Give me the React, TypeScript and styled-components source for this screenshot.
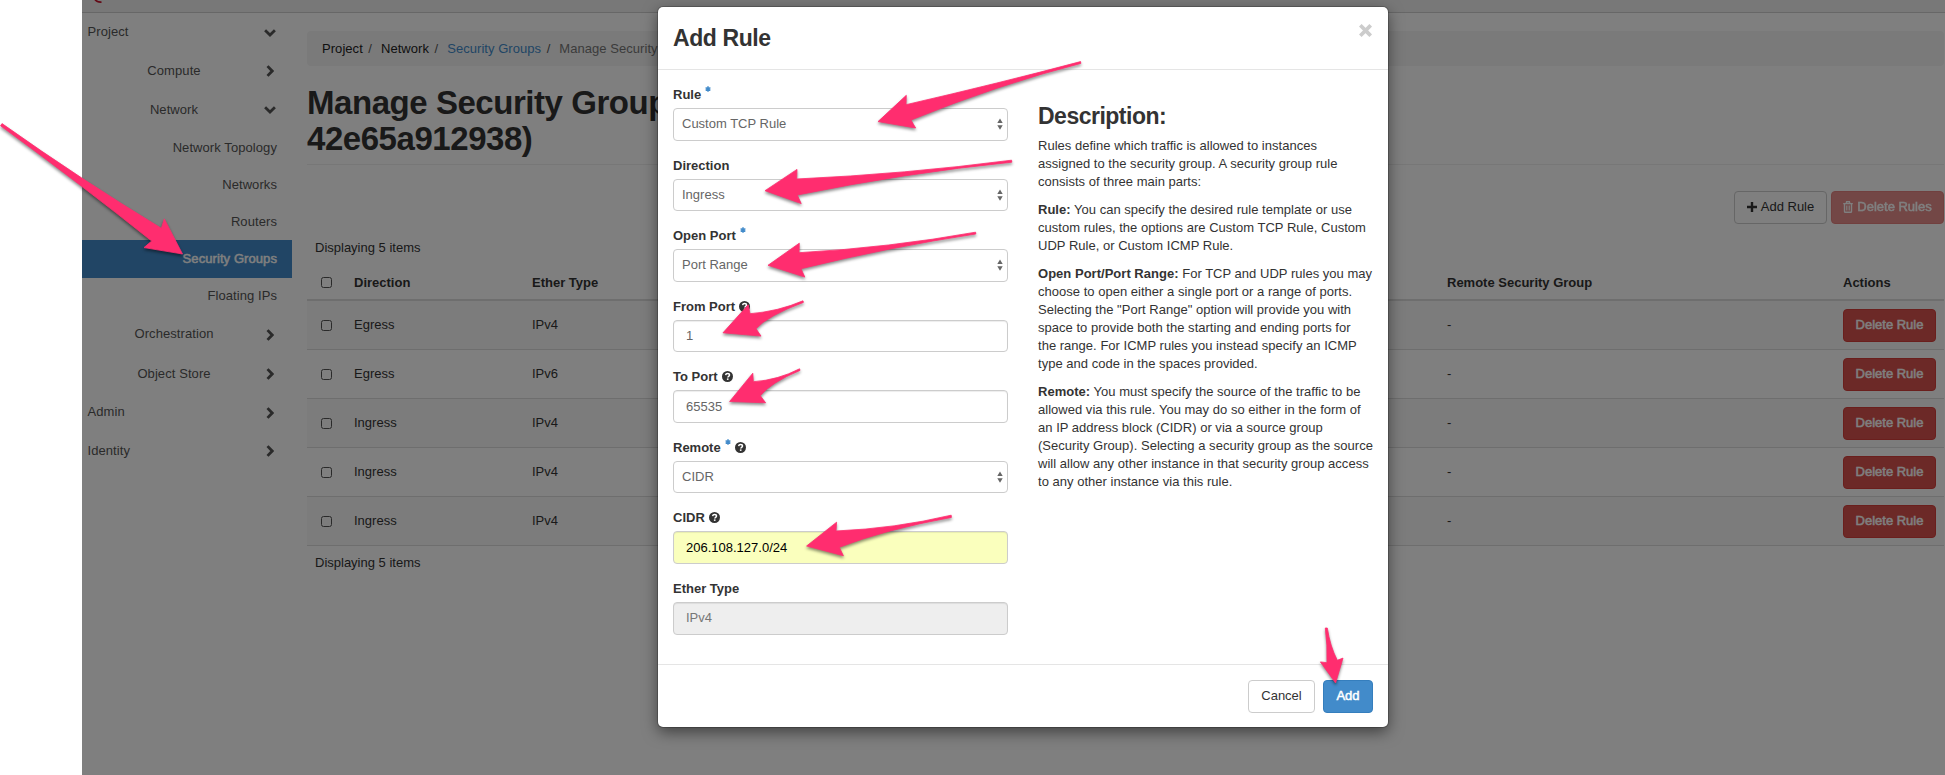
import React from 'react';
import styled, { createGlobalStyle, css } from 'styled-components';

const GlobalStyle = createGlobalStyle`
  * { box-sizing: border-box; }
  html, body { margin: 0; padding: 0; background: #fff; }
  body {
    width: 1945px;
    height: 775px;
    overflow: hidden;
    font-family: "Helvetica Neue", "Liberation Sans", Arial, sans-serif;
    font-size: 13px;
    line-height: 18px;
    color: #333;
  }
`;

/* ---------- page shell ---------- */

const Page = styled.div`
  position: relative;
  display: flex;
  width: 1945px;
  height: 775px;
  overflow: hidden;
`;

const Gutter = styled.div`
  flex: 0 0 82px;
  background: #fff;
`;

const Shell = styled.div`
  flex: 1;
  display: flex;
  flex-direction: column;
  background: #fff;
`;

const TopBar = styled.header`
  height: 13px;
  padding-left: 12px;
  background: #f0f0f0;
  border-bottom: 1px solid #cfcfcf;
  svg { display: block; }
`;

const Columns = styled.div`
  flex: 1;
  display: flex;
`;

/* ---------- sidebar ---------- */

const Sidebar = styled.nav`
  width: 210px;
  color: #555;
  letter-spacing: 0.08px;
`;

const NavHeader = styled.div<{ $height?: number }>`
  display: flex;
  align-items: center;
  justify-content: space-between;
  height: ${p => p.$height ?? 39}px;
  padding: 0 15px 0 5.5px;
`;

const NavTitle = styled.span<{ $nested?: boolean }>`
  ${p => p.$nested && css`
    width: 173px;
    text-align: center;
  `}
`;

const ChevronBox = styled.span`
  display: flex;
  justify-content: center;
  width: 14px;
  margin-top: 1px;
`;

const NavLeaf = styled.div<{ $active?: boolean; $height?: number }>`
  display: flex;
  align-items: center;
  justify-content: flex-end;
  height: ${p => p.$height ?? 37}px;
  padding-right: 15px;
  ${p => p.$active && css`
    background: #428bca;
    color: #fff;
    -webkit-text-stroke: 0.5px #fff;
  `}
`;

/* ---------- main content ---------- */

const Main = styled.main`
  flex: 1;
  padding: 18px 1px 0 15px;
`;

const Breadcrumb = styled.div`
  display: flex;
  align-items: center;
  height: 35px;
  padding-left: 15px;
  background: #f5f5f5;
  border-radius: 4px;
  overflow: hidden;
  white-space: nowrap;
  letter-spacing: 0.05px;
`;

const Crumb = styled.span<{ $color?: string }>`
  color: ${p => p.$color ?? '#222'};
`;

const Slash = styled.span`
  margin: 0 9px 0 5.5px;
  color: #555;
`;

const PageTitle = styled.h1`
  margin: 19px 0 0;
  height: 80px;
  border-bottom: 1px solid #eee;
  font-size: 33px;
  line-height: 36.3px;
  font-weight: 700;
  letter-spacing: -0.45px;
  white-space: nowrap;
`;

const Toolbar = styled.div`
  display: flex;
  justify-content: flex-end;
  gap: 4px;
  padding-top: 26px;
  height: 74px;
`;

const Button = styled.button<{ $kind?: 'default' | 'primary' | 'danger'; $faded?: boolean; $width: number }>`
  display: inline-flex;
  align-items: center;
  justify-content: center;
  gap: 4px;
  width: ${p => p.$width}px;
  height: 33px;
  padding: 0 0 1px;
  border: 1px solid #ccc;
  border-radius: 4px;
  background: #fff;
  color: #333;
  font: inherit;
  white-space: nowrap;
  ${p => p.$kind === 'primary' && css`
    background: #428bca; border-color: #357ebd; color: #fff;
    -webkit-text-stroke: 0.5px #fff;
  `}
  ${p => p.$kind === 'danger' && css`
    background: #d9534f; border-color: #d43f3a; color: #fff;
    -webkit-text-stroke: 0.5px #fff;
  `}
  ${p => p.$faded && css`opacity: 0.65;`}
`;

const TableNote = styled.div<{ $footer?: boolean }>`
  padding: ${p => (p.$footer ? 8 : 0)}px 0 0 8px;
`;

const Row = styled.div<{ $head?: boolean; $striped?: boolean }>`
  display: grid;
  grid-template-columns: 39px 178px 915px 396px 1fr;
  align-items: center;
  height: ${p => (p.$head ? 44 : 49)}px;
  padding-top: ${p => (p.$head ? 9 : 0)}px;
  border-bottom: ${p => (p.$head ? 2 : 1)}px solid #ddd;
  background: ${p => (p.$striped ? '#f9f9f9' : 'transparent')};
  font-weight: ${p => (p.$head ? 700 : 400)};
`;

const Cell = styled.div<{ $text?: boolean }>`
  padding: 0 0 ${p => (p.$text ? 1 : 0)}px 8px;
`;

const CheckBox = styled.span`
  display: block;
  width: 11px;
  height: 11px;
  margin-left: 14px;
  border: 1px solid #555;
  border-radius: 2.5px;
`;

/* ---------- modal ---------- */

const Backdrop = styled.div`
  position: absolute;
  inset: 0 0 0 82px;
  padding: 7px 0 0 576px;
  background: rgba(0, 0, 0, 0.5);
`;

const Modal = styled.section`
  width: 730px;
  height: 720px;
  background: #fff;
  border-radius: 5px;
  box-shadow: 0 0 0 1px rgba(0, 0, 0, 0.2), 0 5px 15px rgba(0, 0, 0, 0.5);
`;

const ModalHeader = styled.header`
  display: flex;
  justify-content: space-between;
  height: 63px;
  padding: 17px 16px 0 15px;
  border-bottom: 1px solid #e5e5e5;
`;

const Heading = styled.h3`
  margin: 0;
  font-size: 23px;
  line-height: 25px;
  font-weight: 700;
  letter-spacing: -0.4px;
`;

const ModalTitle = styled(Heading)`
  padding-top: 2px;
`;

const ModalBody = styled.div`
  display: flex;
  height: 594px;
  padding: 15px;
`;

const Form = styled.div`
  width: 335px;
`;

const Field = styled.div`
  margin-bottom: 15px;
`;

const Label = styled.label`
  display: flex;
  align-items: center;
  height: 18px;
  padding-top: 2px;
  margin-bottom: 5px;
  font-weight: 700;
  white-space: nowrap;
`;

const Star = styled.svg`
  margin: -12px 0 0 4px;
`;

const Help = styled.svg`
  margin: -1px 0 0 4px;
`;

const Control = styled.div<{ $select?: boolean; $fill?: string; $color?: string }>`
  display: flex;
  align-items: center;
  justify-content: space-between;
  height: 32.57px;
  padding: 0 4px 0 ${p => (p.$select ? 8 : 12)}px;
  border: 1px solid #ccc;
  border-radius: 4px;
  background: ${p => p.$fill ?? '#fff'};
  color: ${p => p.$color ?? '#666'};
  ${p => !p.$select && css`box-shadow: inset 0 1px 1px rgba(0, 0, 0, 0.075);`}
`;

const Description = styled.div`
  width: 335px;
  margin-left: 30px;
  padding-top: 19px;
  white-space: nowrap;
  letter-spacing: 0.02px;
`;

const Paragraph = styled.p`
  margin: 0 0 10px;
`;

const DescriptionTitle = styled(Heading)`
  margin: 0 0 8px;
  letter-spacing: -0.5px;
`;

const ModalFooter = styled.footer`
  display: flex;
  justify-content: flex-end;
  gap: 8px;
  padding: 15px;
  border-top: 1px solid #e5e5e5;
`;

/* ---------- icons ---------- */

const ChevronDown = () => (
  <ChevronBox>
    <svg width="12" height="8" viewBox="0 0 12 8">
      <path d="M1.1 1.3 6 6 10.9 1.3" fill="none" stroke="#555" strokeWidth="2.8" />
    </svg>
  </ChevronBox>
);

const ChevronRight = () => (
  <ChevronBox>
    <svg width="8" height="12" viewBox="0 0 8 12">
      <path d="M1.5 1.1 6.2 6 1.5 10.9" fill="none" stroke="#555" strokeWidth="2.8" />
    </svg>
  </ChevronBox>
);

const Asterisk = () => (
  <Star width="6" height="6" viewBox="0 0 6 6">
    <path d="M3 .2V5.8M.6 1.6 5.4 4.4M5.4 1.6.6 4.4" stroke="#428bca" strokeWidth="1.5" />
  </Star>
);

const HelpIcon = () => (
  <Help width="11" height="11" viewBox="0 0 11 11">
    <circle cx="5.5" cy="5.5" r="5.5" fill="#333" />
    <path d="M3.6 4.2C3.8 2.9 4.7 2.5 5.6 2.5c1 0 1.9.6 1.9 1.6 0 1.2-1.7 1.3-1.7 2.5" fill="none" stroke="#fff" strokeWidth="1.5" />
    <rect x="4.9" y="7.4" width="1.6" height="1.5" fill="#fff" />
  </Help>
);

const CloseIcon = () => (
  <svg width="13" height="13" viewBox="0 0 13 13">
    <path d="M2.6 2.6 10.4 10.4M10.4 2.6 2.6 10.4" stroke="#ccc" strokeWidth="3.7" strokeLinecap="square" />
  </svg>
);

const PlusIcon = () => (
  <svg width="10" height="10" viewBox="0 0 10 10">
    <path d="M5 0v10M0 5h10" stroke="#333" strokeWidth="2.4" />
  </svg>
);

const TrashIcon = () => (
  <svg width="10" height="12" viewBox="0 0 10 12" fill="none" stroke="#fff">
    <path d="M.2 2.6H9.8M3.2 2.4 3.6.8H6.4L6.8 2.4M1.5 2.8V10.4Q1.5 11.3 2.3 11.3H7.7Q8.5 11.3 8.5 10.4V2.8" strokeWidth="1.4" />
    <path d="M3.5 4.5V9.5M5 4.5V9.5M6.5 4.5V9.5" strokeWidth=".8" />
  </svg>
);

const SelectArrows = () => (
  <svg width="6" height="12" viewBox="0 0 6 12">
    <path d="M3 .4 5.7 5H.3ZM.3 7.2H5.7L3 11.8Z" fill="#666" />
  </svg>
);

/* ---------- annotation arrows ---------- */

const Annotations = styled.svg`
  position: absolute;
  inset: 0;
  filter: drop-shadow(0 2px 1.5px rgba(0, 0, 0, 0.45));
`;

const arrowPaths = [
  'M2 123.6Q81 179.5 161.3 228.3L164.3 218.9 182.5 254 144 247.6 151.7 241Q81 184.5 .6 125.8Z',
  'M1080.6 61.6Q1000 83 906 104.7L906.3 95.3 878 121.6 915.6 128 911 120Q1000 84 1080.8 63.4Z',
  'M1011.6 160.2Q905 174 796.7 179L797 169.4 765 190.7 801.2 203.6 797.3 195Q905 173 1011.8 162.2Z',
  'M975.6 232.2Q890 247.5 799 252.7L799.3 243.2 768 265.3 804.8 277.1 801 268.7Q890 247 975.8 234Z',
  'M803 300.8Q778 311.5 750 313.7L748.2 304.8 723 332.8 761 336.1 756 328.7Q768 315.5 803.4 302.4Z',
  'M799.6 368.8Q778 380 753.3 381.7L752.8 373.2 729.6 401.5 765.6 402.8 760.3 395.7Q771 382.5 800 370.4Z',
  'M951.2 515.2Q895 528.5 836 531L836.6 522.2 806.6 546 843.4 555.8 839.3 547.3Q885 529.5 951.4 517.4Z',
  'M1325.3 628Q1327.6 645 1327 662.7L1320.4 661.9 1335.6 683 1343 658.1 1337.3 660.3Q1330 646 1327.3 628Z',
];

/* ---------- data ---------- */

const rules = [
  ['Egress', 'IPv4'],
  ['Egress', 'IPv6'],
  ['Ingress', 'IPv4'],
  ['Ingress', 'IPv4'],
  ['Ingress', 'IPv4'],
];

type FieldSpec = {
  label: string;
  value: string;
  required?: boolean;
  help?: boolean;
  select?: boolean;
  fill?: string;
  color?: string;
};

const fields: FieldSpec[] = [
  { label: 'Rule', value: 'Custom TCP Rule', required: true, select: true },
  { label: 'Direction', value: 'Ingress', select: true },
  { label: 'Open Port', value: 'Port Range', required: true, select: true },
  { label: 'From Port', value: '1', help: true },
  { label: 'To Port', value: '65535', help: true },
  { label: 'Remote', value: 'CIDR', required: true, help: true, select: true },
  { label: 'CIDR', value: '206.108.127.0/24', help: true, fill: '#faffbd', color: '#000' },
  { label: 'Ether Type', value: 'IPv4', fill: '#eee', color: '#777' },
];

const paragraphs: { term?: string; lines: string[] }[] = [
  {
    lines: [
      'Rules define which traffic is allowed to instances',
      'assigned to the security group. A security group rule',
      'consists of three main parts:',
    ],
  },
  {
    term: 'Rule:',
    lines: [
      ' You can specify the desired rule template or use',
      'custom rules, the options are Custom TCP Rule, Custom',
      'UDP Rule, or Custom ICMP Rule.',
    ],
  },
  {
    term: 'Open Port/Port Range:',
    lines: [
      ' For TCP and UDP rules you may',
      'choose to open either a single port or a range of ports.',
      'Selecting the "Port Range" option will provide you with',
      'space to provide both the starting and ending ports for',
      'the range. For ICMP rules you instead specify an ICMP',
      'type and code in the spaces provided.',
    ],
  },
  {
    term: 'Remote:',
    lines: [
      ' You must specify the source of the traffic to be',
      'allowed via this rule. You may do so either in the form of',
      'an IP address block (CIDR) or via a source group',
      '(Security Group). Selecting a security group as the source',
      'will allow any other instance in that security group access',
      'to any other instance via this rule.',
    ],
  },
];

export default function App() {
  return (
    <>
      <GlobalStyle />
      <Page>
        <Gutter />
        <Shell>
          <TopBar>
            <svg width="11" height="4" viewBox="0 0 11 4">
              <path d="M1 -.5Q3 2.4 7.5 2.2" fill="none" stroke="#c8102a" strokeWidth="1.7" />
            </svg>
          </TopBar>
          <Columns>
            <Sidebar>
              <NavHeader $height={38}><NavTitle>Project</NavTitle><ChevronDown /></NavHeader>
              <NavHeader><NavTitle $nested>Compute</NavTitle><ChevronRight /></NavHeader>
              <NavHeader><NavTitle $nested>Network</NavTitle><ChevronDown /></NavHeader>
              <NavLeaf>Network Topology</NavLeaf>
              <NavLeaf>Networks</NavLeaf>
              <NavLeaf>Routers</NavLeaf>
              <NavLeaf $active $height={38}>Security Groups</NavLeaf>
              <NavLeaf $height={36}>Floating IPs</NavLeaf>
              <NavHeader $height={40}><NavTitle $nested>Orchestration</NavTitle><ChevronRight /></NavHeader>
              <NavHeader><NavTitle $nested>Object Store</NavTitle><ChevronRight /></NavHeader>
              <NavHeader $height={38}><NavTitle>Admin</NavTitle><ChevronRight /></NavHeader>
              <NavHeader><NavTitle>Identity</NavTitle><ChevronRight /></NavHeader>
            </Sidebar>
            <Main>
              <Breadcrumb>
                <Crumb>Project</Crumb><Slash>/</Slash>
                <Crumb>Network</Crumb><Slash>/</Slash>
                <Crumb $color="#428bca">Security Groups</Crumb><Slash>/</Slash>
                <Crumb $color="#777">Manage Security</Crumb>
              </Breadcrumb>
              <PageTitle>Manage Security Group<br />42e65a912938)</PageTitle>
              <Toolbar>
                <Button $width={93}><PlusIcon />Add Rule</Button>
                <Button $width={113} $kind="danger" $faded><TrashIcon />Delete Rules</Button>
              </Toolbar>
              <TableNote>Displaying 5 items</TableNote>
              <Row $head>
                <CheckBox />
                <Cell>Direction</Cell>
                <Cell>Ether Type</Cell>
                <Cell>Remote Security Group</Cell>
                <Cell>Actions</Cell>
              </Row>
              {rules.map(([direction, ether], i) => (
                <Row key={i} $striped={i % 2 === 0}>
                  <CheckBox />
                  <Cell $text>{direction}</Cell>
                  <Cell $text>{ether}</Cell>
                  <Cell $text>-</Cell>
                  <Cell><Button $width={93} $kind="danger">Delete Rule</Button></Cell>
                </Row>
              ))}
              <TableNote $footer>Displaying 5 items</TableNote>
            </Main>
          </Columns>
        </Shell>

        <Backdrop>
          <Modal>
            <ModalHeader>
              <ModalTitle>Add Rule</ModalTitle>
              <CloseIcon />
            </ModalHeader>
            <ModalBody>
              <Form>
                {fields.map(f => (
                  <Field key={f.label}>
                    <Label>
                      {f.label}
                      {f.required && <Asterisk />}
                      {f.help && <HelpIcon />}
                    </Label>
                    <Control $select={f.select} $fill={f.fill} $color={f.color}>
                      <span>{f.value}</span>
                      {f.select && <SelectArrows />}
                    </Control>
                  </Field>
                ))}
              </Form>
              <Description>
                <DescriptionTitle>Description:</DescriptionTitle>
                {paragraphs.map((p, i) => (
                  <Paragraph key={i}>
                    {p.term && <strong>{p.term}</strong>}
                    {p.lines.map((line, j) => (
                      <React.Fragment key={j}>
                        {j > 0 && <br />}
                        {line}
                      </React.Fragment>
                    ))}
                  </Paragraph>
                ))}
              </Description>
            </ModalBody>
            <ModalFooter>
              <Button $width={67}>Cancel</Button>
              <Button $width={50} $kind="primary">Add</Button>
            </ModalFooter>
          </Modal>
        </Backdrop>

        <Annotations width="1945" height="775" viewBox="0 0 1945 775">
          {arrowPaths.map(d => (
            <path key={d} d={d} fill="#ff2d6f" stroke="#ff2d6f" strokeWidth="0.8" strokeLinejoin="round" />
          ))}
        </Annotations>
      </Page>
    </>
  );
}
